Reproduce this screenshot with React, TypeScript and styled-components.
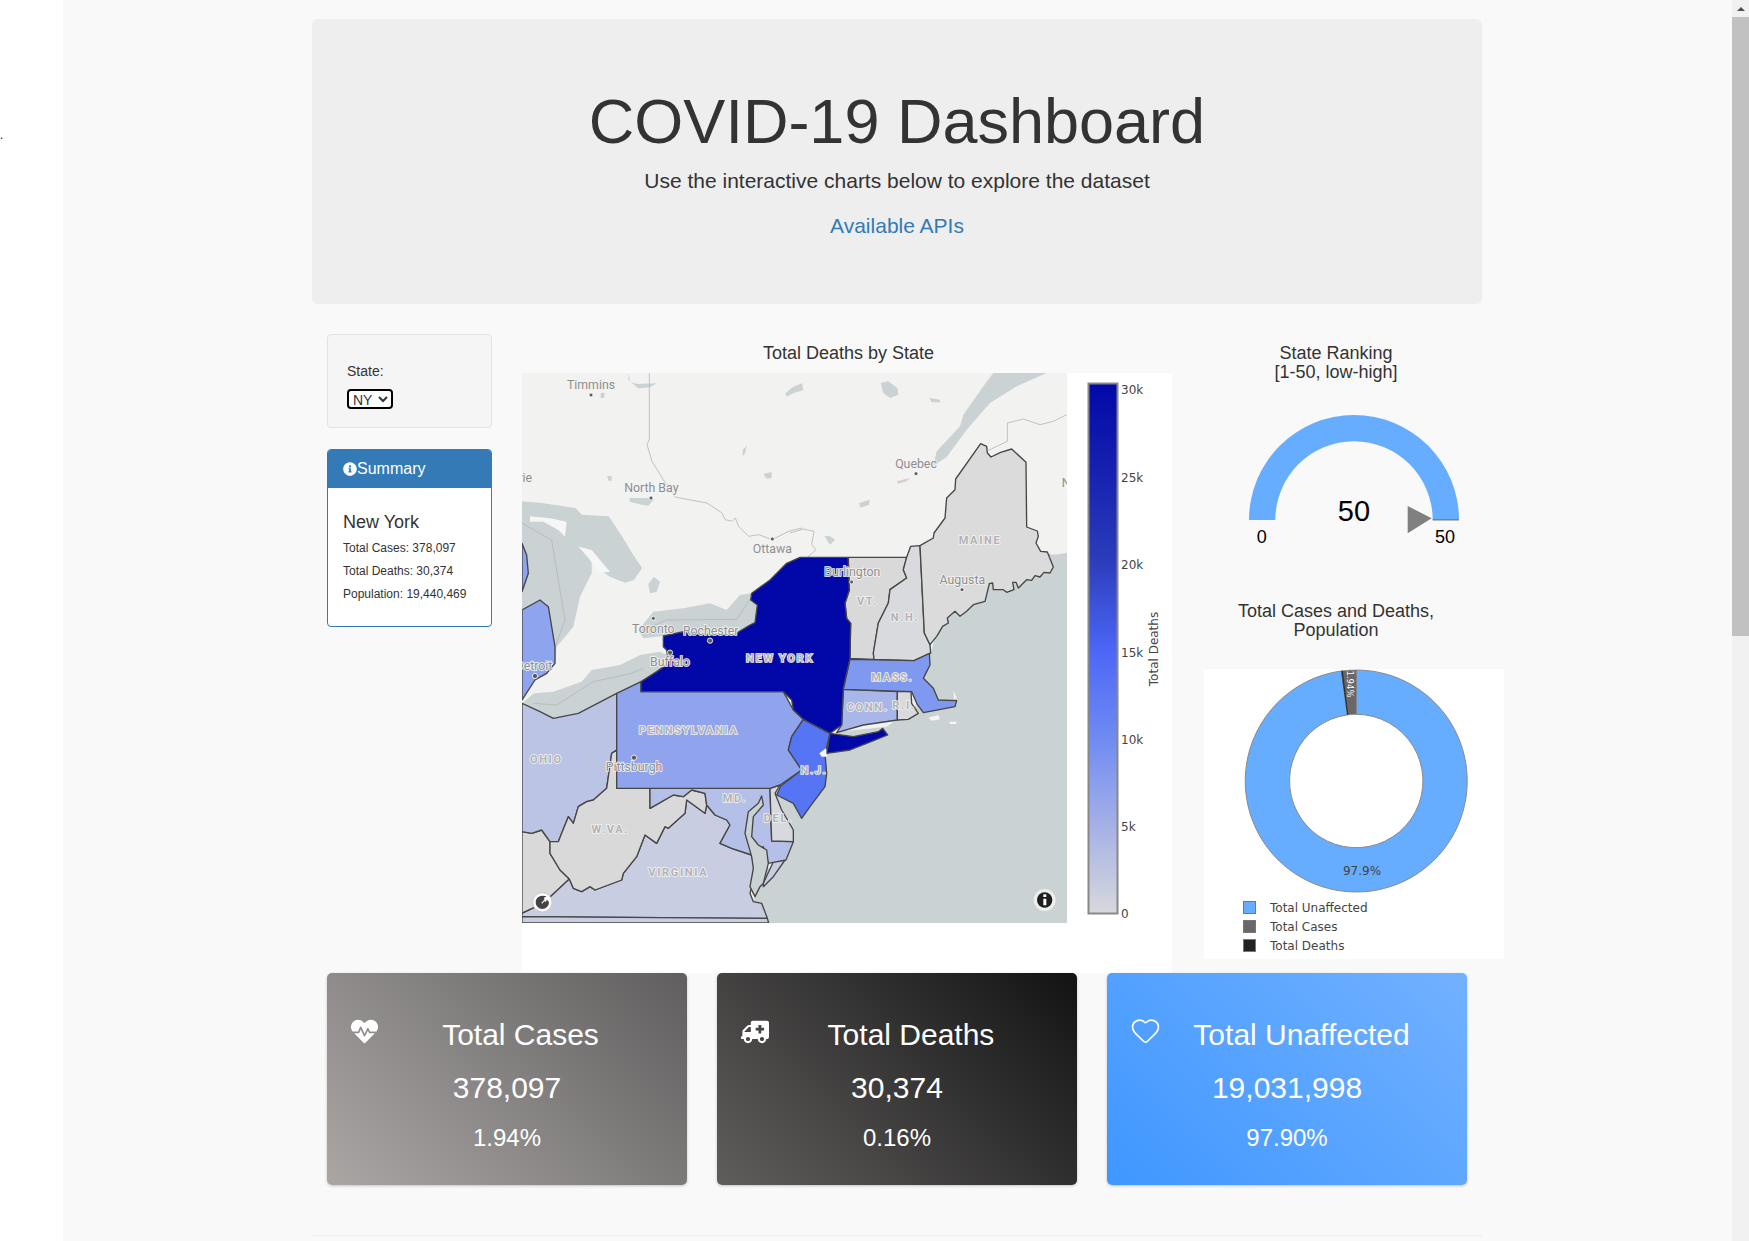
import React from 'react';
import styled, { createGlobalStyle } from 'styled-components';
import { FaAmbulance, FaHeartbeat, FaInfoCircle } from 'react-icons/fa';
import { Heart } from 'lucide-react';

const GlobalStyle = createGlobalStyle`
  html, body {
    margin: 0;
    padding: 0;
    background: #fff;
  }

  * {
    box-sizing: border-box;
  }
`;

const Page = styled.div`
  display: flex;
  width: 100%;
  height: 1241px;
  overflow: hidden;
  font-family: 'Liberation Sans', Arial, sans-serif;
  color: #333;
`;

const Gutter = styled.div`
  flex: 0 0 63px;
  padding-top: 128px;
  background: #fff;
  color: #000;
  font: 12px/14px 'Liberation Serif', serif;
`;

const Main = styled.main`
  flex: 1;
  padding-top: 19px;
  background: #f9f9f9;
`;

const Container = styled.div`
  width: 1170px;
  margin-left: 249px;
`;

const Jumbotron = styled.header`
  height: 285px;
  margin-bottom: 30px;
  padding: 68px 60px 0;
  border-radius: 6px;
  background: #eee;
  text-align: center;
`;

const Title = styled.h1`
  margin: 0 0 10px;
  font-size: 63px;
  font-weight: 400;
  line-height: 69px;
`;

const Lead = styled.p`
  margin: 0 0 15px;
  font-size: 21px;
  line-height: 30px;
`;

const LeadLink = styled.a`
  color: #337ab7;
  text-decoration: none;
`;

const ChartRow = styled.div`
  display: flex;
  height: 639px;
`;

const SideColumn = styled.aside`
  flex: 0 0 195px;
  padding: 0 15px;
`;

const Well = styled.div`
  height: 94px;
  margin-bottom: 21px;
  padding: 26px 19px 0;
  border: 1px solid #e3e3e3;
  border-radius: 4px;
  background: #f5f5f5;
  font-size: 14px;
`;

const FieldLabel = styled.label`
  display: block;
  height: 20px;
  line-height: 20px;
  margin-bottom: 8px;
`;

const StateSelect = styled.select`
  display: block;
  width: 46px;
  height: 20px;
  padding: 0;
  border: 2px solid #000;
  border-radius: 4px;
  background: #fff;
  color: #333;
  font-family: 'Liberation Sans', Arial, sans-serif;
  font-size: 14px;
`;

const Panel = styled.section`
  height: 178px;
  border: 1px solid #337ab7;
  border-radius: 4px;
  background: #fff;
  overflow: hidden;
`;

const PanelHeading = styled.h3`
  display: flex;
  align-items: center;
  height: 38px;
  margin: 0;
  padding: 0 15px;
  background: #337ab7;
  color: #fff;
  font-size: 16px;
  font-weight: 400;
`;

const PanelBody = styled.div`
  padding: 24px 15px 0;
`;

const PlaceName = styled.h4`
  margin: 0 0 5px;
  font-size: 18px;
  font-weight: 400;
  line-height: 20px;
`;

const Fact = styled.p`
  margin: 0;
  font-size: 12px;
  line-height: 23px;
`;

const MapColumn = styled.div`
  flex: 0 0 683px;
  min-width: 0;
  padding: 0 15px;
`;

const ChartTitle = styled.h5`
  margin: 0;
  color: #333;
  font-size: 18px;
  font-weight: 400;
  line-height: 19px;
  text-align: center;
`;

const MapTitle = styled(ChartTitle)`
  height: 39px;
  padding-top: 10px;
`;

const PlotBox = styled.div`
  display: flex;
  width: 650px;
  height: 600px;
  background: #fff;
`;

const MapSvg = styled.svg`
  display: block;
  flex: 0 0 545px;
  width: 545px;
  height: 550px;
  overflow: hidden;
`;

const ColorbarSvg = styled.svg`
  display: block;
  flex: 0 0 105px;
  width: 105px;
  height: 600px;
`;

const RightColumn = styled.div`
  flex: 0 0 292px;
  min-width: 0;
  padding: 10px 15px 0;
`;

const GaugeSvg = styled.svg`
  display: block;
  width: 262px;
  height: 160px;
  margin: 19px 0 41px;
`;

const DonutPanel = styled.div`
  width: 300px;
  height: 290px;
  margin: 29px 0 0 -1px;
  background: #fff;
`;

const DonutSvg = styled.svg`
  display: block;
  width: 300px;
  height: 224px;
  overflow: visible;
`;

const Legend = styled.ul`
  list-style: none;
  margin: 5px 0 0;
  padding: 0 0 0 39px;
`;

const LegendItem = styled.li`
  display: flex;
  align-items: center;
  gap: 14px;
  height: 19px;
  color: #444;
  font-family: 'DejaVu Sans', Verdana, sans-serif;
  font-size: 12px;
`;

const Swatch = styled.span<{ $color: string }>`
  flex: 0 0 13px;
  height: 13px;
  border: 1px solid #777;
  background: ${(p) => p.$color};
`;

const CardRow = styled.div`
  display: grid;
  grid-template-columns: repeat(3, 360px);
  gap: 30px;
  padding: 0 15px;
`;

const Card = styled.article<{ $from: string; $to: string }>`
  height: 212px;
  padding: 45px 24px 0;
  border-radius: 5px;
  background: linear-gradient(45deg, ${(p) => p.$from}, ${(p) => p.$to});
  box-shadow: 0 1px 3px rgba(0, 0, 0, 0.22);
  color: #fff;
  text-align: center;
`;

const CardHead = styled.div`
  display: flex;
  align-items: flex-start;
`;

const CardIcon = styled.span<{ $flip?: boolean }>`
  display: block;
  flex: 0 0 auto;
  height: 26px;
  line-height: 0;
  transform: ${(p) => (p.$flip ? 'scaleX(-1)' : 'none')};
`;

const HeartOutline = styled(Heart)`
  margin: -3px -1px 0 -1px;
`;

const CardTitle = styled.h2`
  flex: 1;
  margin: 0;
  font-size: 30px;
  font-weight: 400;
  line-height: 33px;
`;

const CardValue = styled.div`
  margin-top: 20px;
  font-size: 30px;
  line-height: 33px;
`;

const CardPercent = styled.div`
  margin-top: 21px;
  font-size: 24px;
  line-height: 26px;
`;

const Rule = styled.hr`
  height: 0;
  margin: 50px 0 0;
  border: 0;
  border-top: 1px solid #eee;
`;

const Scrollbar = styled.div`
  display: flex;
  flex: 0 0 17px;
  flex-direction: column;
  background: #f1f1f1;
`;

const ScrollButton = styled.div`
  display: flex;
  flex: 0 0 17px;
  align-items: center;
  justify-content: center;

  &::before {
    content: '';
    border-left: 4px solid transparent;
    border-right: 4px solid transparent;
    border-bottom: 4px solid #505050;
  }
`;

const ScrollThumb = styled.div`
  flex: 0 0 619px;
  background: #c1c1c1;
`;

const Land = styled.rect`
  fill: #f2f2f1;
`;

const Water = styled.polygon`
  fill: #cad2d3;
`;

const Isle = styled.polygon`
  fill: #f6f6f5;
`;

const Frontier = styled.polyline`
  fill: none;
  stroke: #b4b8b8;
  stroke-width: 2.5;
`;

const StateShape = styled.polygon`
  stroke: #464646;
  stroke-width: 4;
  stroke-linejoin: round;
`;

const CityDot = styled.circle`
  fill: #5c5c5c;
  stroke: #fff;
  stroke-width: 2.5;
`;

const CityLabel = styled.text`
  fill: #8e8e8e;
  stroke: #f4f4f4;
  stroke-width: 5px;
  paint-order: stroke;
  font-family: Roboto, 'Liberation Sans', sans-serif;
  font-size: 37px;
  text-anchor: middle;
`;

const StateLabel = styled.text`
  fill: #b2b2b6;
  stroke: #f2f2f2;
  stroke-width: 5px;
  paint-order: stroke;
  font-family: Roboto, 'Liberation Sans', sans-serif;
  font-size: 33px;
  font-weight: 700;
  letter-spacing: 5px;
  text-anchor: middle;
`;

const AxisText = styled.text`
  fill: #444;
  font-family: 'DejaVu Sans', Verdana, sans-serif;
  font-size: 12px;
`;

const GaugeText = styled.text<{ $size: number }>`
  fill: #000;
  font-family: 'Liberation Sans', Arial, sans-serif;
  font-size: ${(p) => p.$size}px;
  text-anchor: middle;
`;

const SliceText = styled.text<{ $color: string; $size: number }>`
  fill: ${(p) => p.$color};
  font-family: 'DejaVu Sans', Verdana, sans-serif;
  font-size: ${(p) => p.$size}px;
  text-anchor: middle;
`;

// coordinates below are traced at 3x, viewBox maps them back onto the 545x550 map
const WATER = [
  '1671,39 1630,44 1612,40 1500,80 1300,200 1262,340 1215,500 1130,560 985,575 960,600 880,600 810,750 795,760 815,810 850,870 850,905 830,960 740,1000 730,1090 772,1149 1671,1149',
  '385,270 430,215 520,205 600,190 650,210 690,165 725,160 720,180 742,195 735,250 670,285 600,285 520,275 460,288 400,295',
  '36,490 72,460 130,455 215,425 245,390 330,375 390,345 450,335 470,345 475,370 440,395 393,425 320,460 205,520 130,535 90,515',
  '36,-116 96,-111 196,-96 216,-76 296,-71 336,-11 366,39 396,84 372,120 345,128 300,110 270,90 250,40 215,25 245,60 245,100 210,170 190,260 140,320 135,370 120,390 75,420 40,480 36,480',
  '415,132 432,110 450,125 440,155 420,160',
];

const UPPER_LAKES = [
  '356,-501 360,-475 382,-468 440,-470 420,-458 385,-455 355,-480',
  '358,-126 420,-126 432,-122 415,-103 395,-106 360,-115',
  '698,-270 710,-282 706,-262 698,-250',
  '760,-198 785,-204 785,-186 770,-184',
  '292,-192 305,-192 305,-178 295,-178',
  '272,-440 284,-442 282,-426 272,-426',
  '826,-440 850,-460 876,-470 880,-450 850,-440 830,-430',
];

const EAST_WATER = [
  '610,0 580,40 520,125 510,160 440,235 430,278 470,252 530,170 600,90 680,40 770,0',
  '272,30 295,25 322,45 325,65 300,75 280,60',
  '208,390 240,380 236,396 210,404',
  '320,325 360,315 350,325 325,332',
  '103,490 118,488 135,500 120,515',
  '418,75 450,80 450,88 425,88',
];

const ISLES = [
  '60,-71 120,-65 170,-55 165,-10 145,-30 100,-55 60,-55',
  '206,20 245,30 300,95 265,100 240,60',
  '1255,533 1285,525 1290,538 1265,542',
  '1318,545 1340,545 1338,552 1320,552',
  '1330,450 1340,475 1333,478',
];

const STATES: { fill: string; points: string }[] = [
  { fill: '#d9d9da', points: '36,875 65,880 95,870 120,905 120,940 150,990 178,1017 100,1090 36,1120' },
  { fill: '#c8cde2', points: '36,1120 100,1090 178,1017 190,1045 215,1055 240,1040 255,1050 335,1020 340,1000 380,950 405,885 440,910 465,860 475,865 525,820 530,780 585,820 590,795 615,825 650,840 660,855 630,910 665,925 725,945 735,1000 720,1060 730,1085 755,1090 772,1135 36,1130' },
  { fill: '#c8cde2', points: '825,960 790,965 760,1030 760,1040 790,1010' },
  { fill: '#c8cde2', points: '36,1130 772,1135 776,1149 36,1149' },
  { fill: '#bcc4e6', points: '36,490 90,515 130,535 205,520 320,460 320,630 305,640 290,745 250,780 230,785 205,800 190,850 175,830 155,880 145,905 120,905 95,870 65,880 36,875' },
  { fill: '#d9d9da', points: '320,745 420,745 420,805 490,765 520,770 545,750 585,760 590,795 585,820 530,780 525,820 475,865 465,860 440,910 405,885 380,950 340,1000 335,1020 255,1050 240,1040 215,1055 190,1045 178,1017 150,990 120,940 120,905 145,905 155,880 175,830 190,850 205,800 230,785 250,780 290,745 305,640 320,630' },
  { fill: '#b5c0e8', points: '420,745 780,745 785,903 850,905 828,960 775,970 760,920 725,945 665,925 630,910 660,855 650,840 615,825 590,795 585,760 545,750 520,770 490,765 420,805' },
  { fill: '#d8d9de', points: '780,745 810,735 795,760 815,810 850,870 850,905 785,903' },
  { fill: '#8fa4ec', points: '320,460 393,425 393,455 820,455 850,510 880,538 845,590 835,630 875,690 810,735 780,745 320,745' },
  { fill: '#5675f4', points: '880,538 960,580 945,640 950,700 945,740 900,800 875,835 850,790 800,765 812,738 875,690 835,630 845,590' },
  { fill: '#d9d9da', points: '1015,52 1190,52 1180,89 1190,114 1140,149 1135,189 1105,249 1090,339 1092,358 1020,355 1022,250 1010,235 1005,190 1018,150' },
  { fill: '#d9dadd', points: '1202,19 1230,17 1243,279 1260,314 1262,340 1212,362 1092,358 1090,339 1105,249 1135,189 1140,149 1190,114 1180,89 1190,52' },
  { fill: '#a8b6ea', points: '1000,448 1162,455 1162,540 1060,555 980,578 995,555' },
  { fill: '#dadadc', points: '1162,455 1203,455 1205,490 1225,520 1195,538 1162,540' },
  { fill: '#7f98f0', points: '1020,358 1212,362 1258,340 1260,375 1240,415 1270,445 1285,480 1340,482 1335,500 1240,518 1220,490 1205,455 1000,448' },
  { fill: '#0208a8', points: '870,52 1014,52 1018,150 1005,190 1010,235 1022,250 1020,355 1000,445 995,555 960,580 1030,590 1105,575 1118,565 1133,585 1070,610 1020,630 950,640 960,580 880,538 850,510 845,480 820,455 393,455 393,425 440,395 475,370 470,330 460,320 460,288 520,275 600,285 670,285 720,255 735,248 742,195 722,180 725,160 780,120 830,70' },
];

const MAINE = '390,518 430,495 432,480 465,435 470,375 495,350 497,318 572,212 590,220 592,240 603,252 632,238 665,228 708,268 710,462 742,474 745,490 738,510 752,535 772,537 790,582 780,600 762,598 750,612 735,608 725,622 710,620 685,645 678,628 668,628 672,650 650,658 640,650 610,650 608,630 598,632 590,665 585,685 550,695 530,715 510,730 495,715 472,735 475,750 458,760 440,790 420,815 403,780';

const CHESAPEAKE = '755,768 745,790 715,815 705,880 725,950 730,985 720,1040 735,1070 750,1040 760,1030 775,970 770,930 745,915 725,890 730,830 760,795';

const TICKS = [
  { label: '30k', y: 21 },
  { label: '25k', y: 109 },
  { label: '20k', y: 196 },
  { label: '15k', y: 284 },
  { label: '10k', y: 371 },
  { label: '5k', y: 458 },
  { label: '0', y: 545 },
];

const CARDS = [
  { title: 'Total Cases', value: '378,097', percent: '1.94%', from: '#a9a6a4', to: '#615e5f', icon: <FaHeartbeat size={27} /> },
  { title: 'Total Deaths', value: '30,374', percent: '0.16%', from: '#605e5d', to: '#131313', icon: <FaAmbulance size={28} />, flip: true },
  { title: 'Total Unaffected', value: '19,031,998', percent: '97.90%', from: '#3f97ff', to: '#72b1ff', icon: <HeartOutline size={31} strokeWidth={1.3} /> },
];

// ring sector between two angles, degrees clockwise from 12 o'clock
const sector = (cx: number, cy: number, outer: number, inner: number, from: number, to: number) => {
  const at = (r: number, deg: number) => {
    const a = (deg * Math.PI) / 180;
    return `${(cx + r * Math.sin(a)).toFixed(2)} ${(cy - r * Math.cos(a)).toFixed(2)}`;
  };
  const big = to - from > 180 ? 1 : 0;
  return `M${at(outer, from)} A${outer} ${outer} 0 ${big} 1 ${at(outer, to)} L${at(inner, to)} A${inner} ${inner} 0 ${big} 0 ${at(inner, from)} Z`;
};

const RegionMap = () => (
  <MapSvg viewBox="36 -501 1635 1650">
    <Land x="36" y="-501" width="1635" height="1650" />
    {WATER.map((points) => (
      <Water key={points} points={points} />
    ))}
    {UPPER_LAKES.map((points) => (
      <Water key={points} points={points} />
    ))}
    <g transform="translate(840 -501)">
      {EAST_WATER.map((points) => (
        <Water key={points} points={points} />
      ))}
      <Frontier points="595,232 652,205 652,150 700,138 750,155 790,145 830,125" />
      <Frontier points="0,480 40,468 72,475 65,515 78,530 50,555" />
    </g>
    {ISLES.map((points) => (
      <Isle key={points} points={points} />
    ))}
    <g transform="translate(36 -501)">
      <Frontier points="382,0 382,200 375,215 390,265 430,330 460,372 500,380 555,390 600,420 610,440 630,445 640,435 650,460 680,490 710,485 750,500 800,475 840,465" />
    </g>
    <Frontier points="36,-50 125,0 165,240 135,320" />
    <Frontier points="70,490 140,495 250,425 365,400 400,385" />
    <Frontier points="400,270 470,240 680,238 722,175" />
    <StateShape fill="#8fa4ee" points="36,210 90,180 115,200 135,320 135,370 110,400 75,420 36,480" />
    <StateShape fill="#8fa4ee" points="36,10 50,45 55,100 36,155" />
    {STATES.map((state) => (
      <StateShape key={state.points} fill={state.fill} points={state.points} />
    ))}
    <g transform="translate(840 -501)">
      <StateShape fill="#dbdbdb" points={MAINE} />
    </g>
    <StateShape fill="#cad2d3" points={CHESAPEAKE} />
    <Isle points="928,640 948,625 950,650 935,650" />

    <g transform="translate(36 -501)">
      <CityDot cx="207" cy="66" r="6" />
      <CityLabel x="207" y="48">Timmins</CityLabel>
      <CityDot cx="387" cy="375" r="6" />
      <CityLabel x="388" y="357">North Bay</CityLabel>
      <CityDot cx="751" cy="498" r="6" />
      <CityLabel x="751" y="540">Ottawa</CityLabel>
      <CityLabel x="-18" y="328">Barrie</CityLabel>
    </g>
    <g transform="translate(840 -501)">
      <CityDot cx="378" cy="302" r="6" />
      <CityLabel x="378" y="285">Quebec</CityLabel>
      <CityDot cx="516" cy="650" r="6" />
      <CityLabel x="517" y="632">Augusta</CityLabel>
      <CityDot cx="185" cy="627" r="6" />
      <CityLabel x="187" y="610">Burlington</CityLabel>
      <CityLabel x="850" y="342">N.B.</CityLabel>
      <StateLabel x="570" y="512">MAINE</StateLabel>
      <StateLabel x="232" y="697">VT.</StateLabel>
      <StateLabel x="345" y="744">N.H.</StateLabel>
    </g>
    <CityDot cx="430" cy="235" r="6" />
    <CityLabel x="430" y="279">Toronto</CityLabel>
    <CityDot cx="600" cy="302" r="8" />
    <CityLabel x="602" y="284">Rochester</CityLabel>
    <CityDot cx="480" cy="338" r="8" />
    <CityLabel x="480" y="377">Buffalo</CityLabel>
    <CityDot cx="75" cy="408" r="8" />
    <CityLabel x="72" y="389">Detroit</CityLabel>
    <CityDot cx="372" cy="653" r="8" />
    <CityLabel x="372" y="692">Pittsburgh</CityLabel>

    <StateLabel x="810" y="367">NEW YORK</StateLabel>
    <StateLabel x="536" y="582">PENNSYLVANIA</StateLabel>
    <StateLabel x="109" y="668">OHIO</StateLabel>
    <StateLabel x="1147" y="423">MASS.</StateLabel>
    <StateLabel x="1073" y="513">CONN.</StateLabel>
    <StateLabel x="1182" y="506">R.I.</StateLabel>
    <StateLabel x="912" y="702">N.J.</StateLabel>
    <StateLabel x="675" y="786">MD.</StateLabel>
    <StateLabel x="805" y="847">DEL.</StateLabel>
    <StateLabel x="301" y="878">W.VA.</StateLabel>
    <StateLabel x="505" y="1008">VIRGINIA</StateLabel>

    <circle cx="97" cy="1087" r="29" fill="#fff" stroke="#c8c8c8" strokeWidth="3" />
    <path d="M97 1067 a20 20 0 1 0 20 20 l-6 -8 l-6 4 l-3 -10 l8 -4 z" fill="#444" />
    <path d="M100 1080 l12 -5 l-5 12 l-3 -4 l-8 8 l-2 -3 l8 -7 z" fill="#fff" />
    <circle cx="1604" cy="1080" r="33" fill="#f1f1f1" opacity="0.9" />
    <circle cx="1604" cy="1080" r="23" fill="#1f1f1f" />
    <rect x="1600" y="1076" width="9" height="20" rx="1" fill="#fff" />
    <rect x="1600" y="1063" width="9" height="8" rx="1" fill="#fff" />
  </MapSvg>
);

const Colorbar = () => (
  <ColorbarSvg viewBox="0 0 105 600">
    <defs>
      <linearGradient id="deaths" x1="0" y1="1" x2="0" y2="0">
        <stop offset="0" stopColor="#d8d8dc" />
        <stop offset="0.17" stopColor="#a3b0e6" />
        <stop offset="0.33" stopColor="#6f8bf2" />
        <stop offset="0.5" stopColor="#4b66f5" />
        <stop offset="0.67" stopColor="#2a3cba" />
        <stop offset="0.85" stopColor="#141fae" />
        <stop offset="1" stopColor="#0208a8" />
      </linearGradient>
    </defs>
    <rect x="21.5" y="10.5" width="29" height="530" fill="url(#deaths)" stroke="#888" strokeWidth="2" />
    {TICKS.map((tick) => (
      <AxisText key={tick.label} x="54" y={tick.y}>
        {tick.label}
      </AxisText>
    ))}
    <AxisText x="91" y="276" textAnchor="middle" transform="rotate(-90 91 276)">
      Total Deaths
    </AxisText>
  </ColorbarSvg>
);

const RankGauge = () => (
  <GaugeSvg viewBox="0 0 262 160">
    <path d={sector(149, 119, 105, 78.7, -90, 90)} fill="#66adff" />
    <rect x="227.7" y="118" width="26.3" height="1.5" fill="#7f7f7f" />
    <polygon points="202.7,105 226.7,117.3 202.7,132.3" fill="#808080" />
    <GaugeText $size={29} x="149" y="120">50</GaugeText>
    <GaugeText $size={18} x="56.7" y="141.5">0</GaugeText>
    <GaugeText $size={18} x="240" y="141.5">50</GaugeText>
  </GaugeSvg>
);

const ShareDonut = () => (
  <DonutSvg viewBox="0 0 300 224">
    <path d={sector(152.2, 112, 111, 66.7, 0, 352.4)} fill="#66adff" stroke="#8a8a8a" strokeWidth="1" />
    <path d={sector(152.2, 112, 111, 66.7, 353, 360)} fill="#6a6768" stroke="#777" strokeWidth="0.6" />
    <path d={sector(152.2, 112, 111, 66.7, 352.4, 353)} fill="#222" stroke="#333" strokeWidth="0.6" />
    <SliceText $color="#fff" $size={8.5} x="0" y="3" transform="translate(146 15) rotate(90)">
      1.94%
    </SliceText>
    <SliceText $color="#444" $size={12} x="158" y="206">97.9%</SliceText>
  </DonutSvg>
);

const App = () => {
  return (
    <Page>
      <GlobalStyle />
      <Gutter>.</Gutter>
      <Main>
        <Container>
          <Jumbotron>
            <Title>COVID-19 Dashboard</Title>
            <Lead>Use the interactive charts below to explore the dataset</Lead>
            <Lead>
              <LeadLink href="#apis">Available APIs</LeadLink>
            </Lead>
          </Jumbotron>

          <ChartRow>
            <SideColumn>
              <Well>
                <FieldLabel htmlFor="state">State:</FieldLabel>
                <StateSelect id="state" defaultValue="NY">
                  <option value="NY">NY</option>
                  <option value="NJ">NJ</option>
                  <option value="PA">PA</option>
                </StateSelect>
              </Well>
              <Panel>
                <PanelHeading>
                  <FaInfoCircle size={14} />
                  Summary
                </PanelHeading>
                <PanelBody>
                  <PlaceName>New York</PlaceName>
                  <Fact>Total Cases: 378,097</Fact>
                  <Fact>Total Deaths: 30,374</Fact>
                  <Fact>Population: 19,440,469</Fact>
                </PanelBody>
              </Panel>
            </SideColumn>

            <MapColumn>
              <MapTitle>Total Deaths by State</MapTitle>
              <PlotBox>
                <RegionMap />
                <Colorbar />
              </PlotBox>
            </MapColumn>

            <RightColumn>
              <ChartTitle>
                State Ranking
                <br />
                [1-50, low-high]
              </ChartTitle>
              <RankGauge />
              <ChartTitle>
                Total Cases and Deaths,
                <br />
                Population
              </ChartTitle>
              <DonutPanel>
                <ShareDonut />
                <Legend>
                  <LegendItem>
                    <Swatch $color="#66adff" />
                    Total Unaffected
                  </LegendItem>
                  <LegendItem>
                    <Swatch $color="#6a6768" />
                    Total Cases
                  </LegendItem>
                  <LegendItem>
                    <Swatch $color="#222" />
                    Total Deaths
                  </LegendItem>
                </Legend>
              </DonutPanel>
            </RightColumn>
          </ChartRow>

          <CardRow>
            {CARDS.map((card) => (
              <Card key={card.title} $from={card.from} $to={card.to}>
                <CardHead>
                  <CardIcon $flip={card.flip}>{card.icon}</CardIcon>
                  <CardTitle>{card.title}</CardTitle>
                </CardHead>
                <CardValue>{card.value}</CardValue>
                <CardPercent>{card.percent}</CardPercent>
              </Card>
            ))}
          </CardRow>

          <Rule />
        </Container>
      </Main>
      <Scrollbar>
        <ScrollButton />
        <ScrollThumb />
      </Scrollbar>
    </Page>
  );
};

export default App;
